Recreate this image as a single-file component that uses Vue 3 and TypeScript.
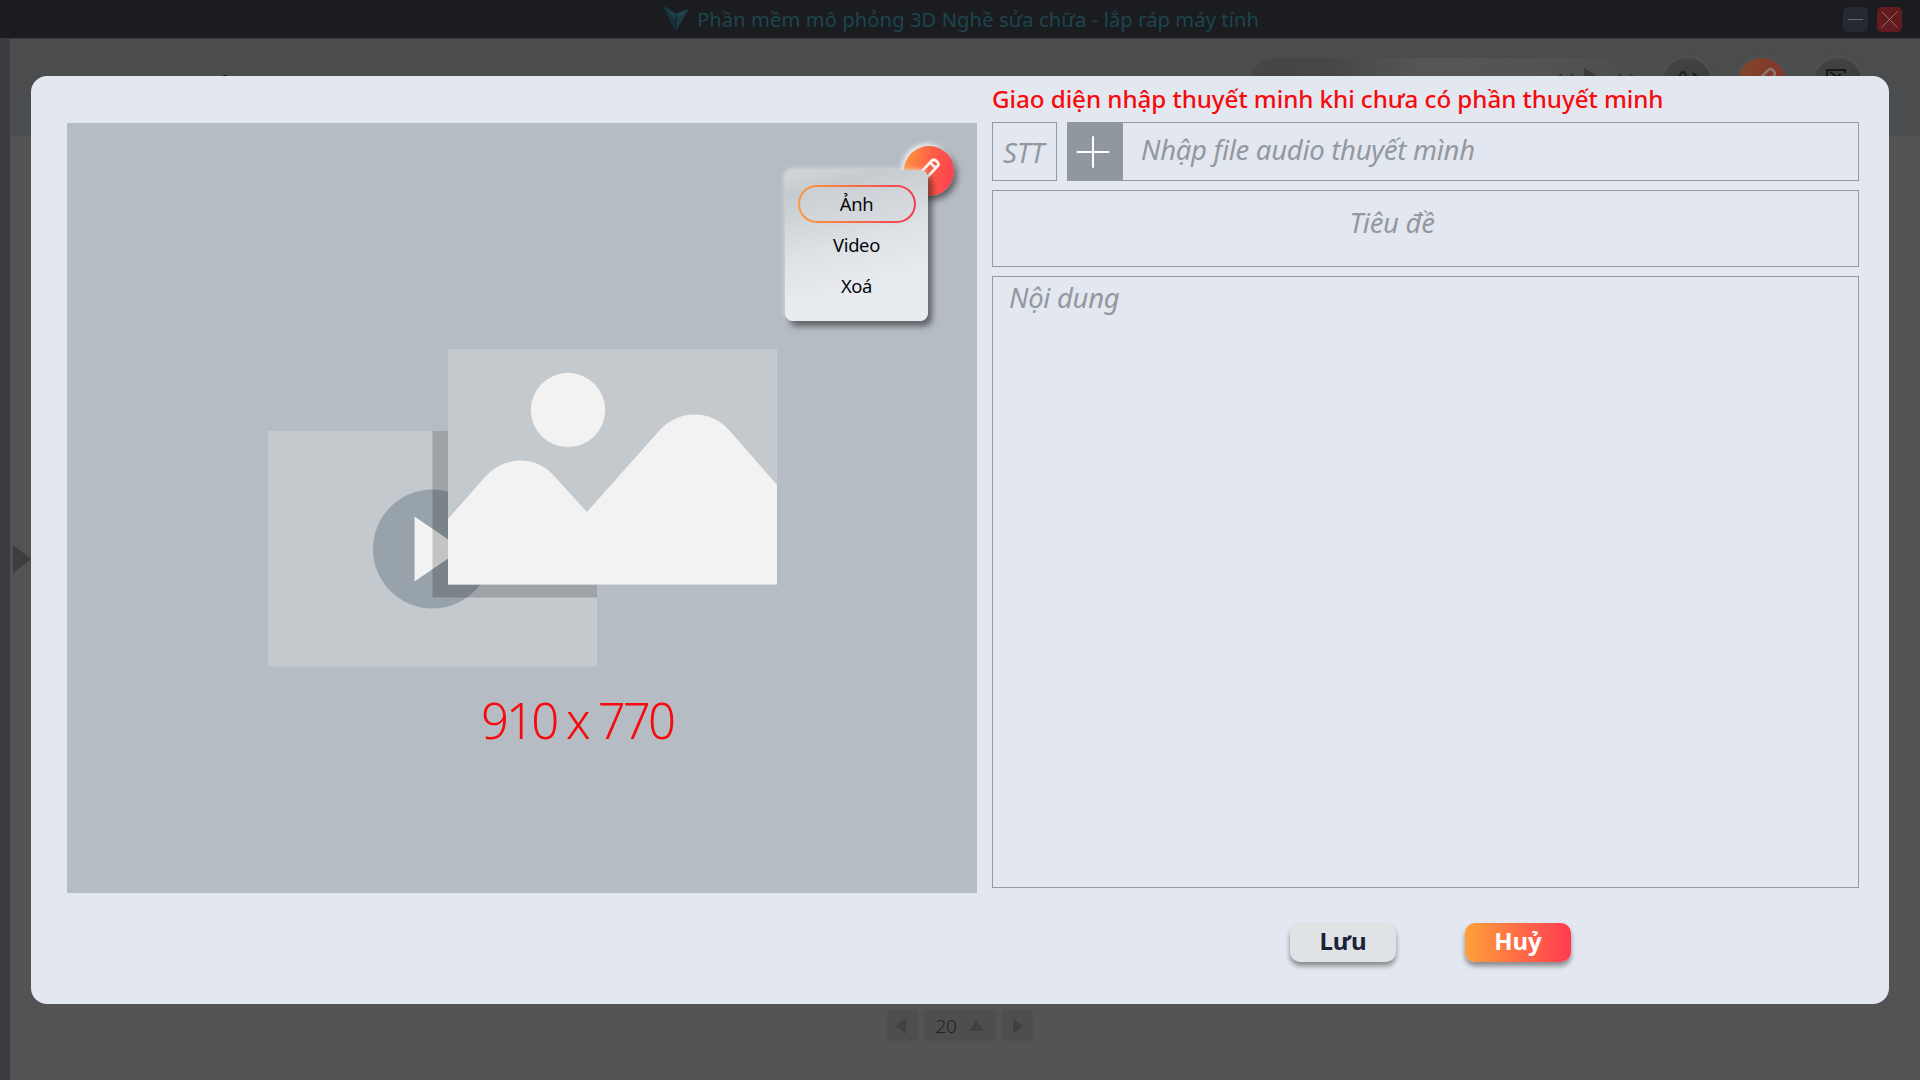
<script setup lang="ts">
import { ref } from 'vue'

const menuItems: string[] = ['Ảnh', 'Video', 'Xoá']
const activeItem = ref<string>('Ảnh')
const pageNumber = ref<number>(20)
</script>

<template>
  <div class="app">
    <header class="titlebar">
      <div class="brand">
        <svg class="logo" width="28" height="26" viewBox="0 0 28 26">
          <path d="M1 0L14 8L13 25Z" fill="#17323a" />
          <path d="M15 8L27 3L14 25Z" fill="#1c3b42" />
          <path d="M1 0L15 8L13 13Z" fill="#1d3f46" />
          <path d="M15 7L27 3L17 11Z" fill="#21474e" />
        </svg>
        <span class="app-title">Phần mềm mô phỏng 3D Nghề sửa chữa - lắp ráp máy tính</span>
      </div>
      <div class="window-buttons">
        <button class="win min">
          <svg width="25" height="25" viewBox="0 0 25 25"><path d="M5 12.500H20" stroke="#686a71" stroke-width="1" /></svg>
        </button>
        <button class="win close">
          <svg width="25" height="25" viewBox="0 0 25 25"><path d="M4.500 4.500L20.500 20.500M20.500 4.500L4.500 20.500" stroke="#8b7071" stroke-width="1" /></svg>
        </button>
      </div>
    </header>

    <div class="body">
      <aside class="rail"></aside>
      <main class="page">
        <div class="toolbar">
          <span class="name-mark"></span>
          <div class="player">
            <svg width="90" height="24" viewBox="0 0 90 24" fill="#39393b">
              <path d="M11 5V19L1 12ZM22 5V19L12 12Z" />
              <path d="M33 0L51 11L33 22Z" />
              <path d="M68 5V19L78 12ZM79 5V19L89 12Z" />
            </svg>
          </div>
          <div class="round">
            <svg width="48" height="48" viewBox="0 0 48 48" fill="none" stroke="#1a1a1f" stroke-width="2">
              <path d="M16 22Q17 14 20 14Q23 14 23 20M30 15L35 20" />
            </svg>
          </div>
          <div class="round hot">
            <svg width="48" height="48" viewBox="0 0 48 48">
              <g transform="rotate(45 24 24)" fill="none" stroke="#8a7672" stroke-width="2.500"><rect x="20" y="8" width="8" height="26" rx="3" /></g>
            </svg>
          </div>
          <div class="round">
            <svg width="48" height="48" viewBox="0 0 48 48" fill="none" stroke="#18181c" stroke-width="2">
              <path d="M13 32V12H31V15M16 14L23 19L27 16" />
            </svg>
          </div>
        </div>
        <div class="workspace">
          <svg class="expand" width="20" height="32" viewBox="0 0 20 32"><path d="M1 1L19 15L1 29Z" fill="#3c3d3e" /></svg>
        </div>
        <footer class="pager">
          <span class="page-btn"><svg width="10" height="16" viewBox="0 0 10 16"><path d="M10 0V16L0 8Z" /></svg></span>
          <span class="page-size">
            {{ pageNumber }}
            <svg width="15" height="11" viewBox="0 0 15 11"><path d="M0 11H15L7.500 0Z" /></svg>
          </span>
          <span class="page-btn"><svg width="10" height="16" viewBox="0 0 10 16"><path d="M0 0V16L10 8Z" /></svg></span>
        </footer>
      </main>
    </div>

    <section class="modal">
      <div class="media">
        <svg class="placeholder" width="510" height="318" viewBox="0 0 510 318">
          <rect x="0" y="82" width="329" height="235.500" fill="#c4c9ce" />
          <circle cx="164.500" cy="200" r="59.500" fill="#98a2aa" />
          <path d="M146.500 167.500V232.500L194 200Z" fill="#f2f2f2" />
          <path d="M164.500 82H329V248.500H164.500Z" fill="#000" opacity=".19" />
          <rect x="180" y="0" width="329" height="235.500" fill="#c4c9ce" />
          <circle cx="300" cy="61" r="37.200" fill="#f2f2f2" />
          <path d="M180 170L217 128Q232 111.500 252.500 111.500Q273 111.500 287 128L319 163L390 83Q405 65.500 427 65.500Q447 65.500 461 81L509 136V235.500H180Z" fill="#f2f2f2" />
        </svg>
        <p class="dimension">910 x 770</p>
        <button class="edit">
          <svg width="50" height="50" viewBox="0 0 50 50">
            <g transform="translate(24.500 24) rotate(43)" fill="none" stroke="#fbf4ee" stroke-width="2.800" stroke-linejoin="round">
              <path d="M-4 -9Q-4 -12 0 -12Q4 -12 4 -9V8L0 14L-4 8ZM-4 -6.500H4" />
            </g>
          </svg>
        </button>
        <nav class="menu">
          <button
            v-for="item in menuItems"
            :key="item"
            class="menu-item"
            :class="{ active: item === activeItem }"
            @click="activeItem = item"
          >{{ item }}</button>
        </nav>
      </div>

      <div class="form">
        <h1 class="notice"><span>Giao diện nhập thuyết minh khi chưa có phần thuyết minh</span></h1>
        <div class="row">
          <div class="field order"><span>STT</span></div>
          <div class="field audio">
            <button class="add">
              <svg width="56" height="58" viewBox="0 0 56 58"><path d="M10.500 29H41.500M26 14V44" stroke="#fff" stroke-width="2" stroke-linecap="round" /></svg>
            </button>
            <span>Nhập file audio thuyết mình</span>
          </div>
        </div>
        <div class="field title"><span>Tiêu đề</span></div>
        <div class="field content"><span>Nội dung</span></div>
        <div class="actions">
          <button class="btn save">Lưu</button>
          <button class="btn cancel">Huỷ</button>
        </div>
      </div>
    </section>
  </div>
</template>

<style>
body {
  margin: 0;
  background: #535353;
}
</style>

<style scoped>
* {
  box-sizing: border-box;
}

.app {
  position: relative;
  display: flex;
  flex-direction: column;
  width: 1920px;
  height: 1080px;
  overflow: hidden;
  background: #535353;
  font-family: 'Noto Sans', sans-serif;
}

button {
  padding: 0;
  border: 0;
  font-family: inherit;
}

svg {
  display: block;
}

.titlebar {
  display: flex;
  align-items: center;
  height: 38px;
  flex: none;
  padding: 0 18px 0 662px;
  background: #1b1c20;
}

.brand {
  display: flex;
  align-items: center;
  flex: 1;
  gap: 7px;
}

.app-title {
  padding-top: 1px;
  color: #1b454d;
  font-size: 20.2px;
  font-weight: 450;
  letter-spacing: 0.07px;
  line-height: 37px;
  white-space: nowrap;
}

.window-buttons {
  display: flex;
  gap: 9px;
}

.win {
  width: 25px;
  height: 25px;
  border-radius: 5px;
}

.min {
  background: #262932;
}

.close {
  background: #641b1f;
}

.body {
  display: flex;
  flex: 1;
  border-top: 1px solid #3c3d3e;
}

.rail {
  width: 10px;
  background: #3b3c3f;
}

.page {
  display: flex;
  flex: 1;
  flex-direction: column;
}

.toolbar {
  display: flex;
  height: 97px;
  padding: 19px 58px 0 212px;
  background: #4b4c4d;
}

.name-mark {
  width: 6px;
  height: 4px;
  margin-top: 17px;
  border-radius: 3px 3px 0 0;
  background: #17181b;
}

.player {
  display: flex;
  width: 434px;
  height: 48px;
  margin-left: auto;
  padding: 10px 0 0 300px;
  border-radius: 24px;
  background: linear-gradient(90deg, #454548, #464648 18%, #545554 38%, #545454 65%, #4b4c4d 90%);
}

.round {
  width: 48px;
  height: 48px;
  margin-left: 28px;
  border-radius: 50%;
  background: linear-gradient(150deg, #444545, #36373a);
  box-shadow: 0 0 4px #5a5b5b;
}

.player + .round {
  margin-left: -22px;
  margin-right: -1px;
}

.round.hot {
  background: linear-gradient(90deg, #7f4727, #85362e);
}

.workspace {
  display: flex;
  align-items: center;
  height: 848px;
  padding-left: 2px;
}

.pager {
  display: flex;
  align-items: center;
  gap: 6px;
  height: 58px;
  padding: 25px 0 0 877px;
  color: #1f1f1f;
}

.pager svg {
  fill: #414141;
}

.page-btn,
.page-size {
  display: flex;
  align-items: center;
  justify-content: center;
  height: 31px;
  border-radius: 3px;
  background: #4e4e4e;
}

.page-btn {
  width: 31px;
}

.page-btn:first-child {
  padding-right: 3px;
}

.page-size {
  width: 72px;
  gap: 13px;
  font-size: 19px;
  font-weight: 350;
  letter-spacing: -0.4px;
}

.modal {
  position: absolute;
  top: 76px;
  left: 31px;
  display: flex;
  gap: 15px;
  width: 1858px;
  height: 928px;
  padding: 0 30px 0 36px;
  border-radius: 16px;
  background: #e3e7ef;
}

.media {
  position: relative;
  flex: none;
  width: 910px;
  height: 770px;
  margin-top: 47px;
  padding-top: 226px;
  background: #b6bcc4;
}

.placeholder {
  margin-left: 201px;
}

.dimension {
  margin: 20px 0 0 110px;
  color: #f60a0c;
  font-size: 49px;
  font-weight: 300;
  line-height: 67px;
  letter-spacing: -2.9px;
  text-align: center;
}

.edit {
  position: absolute;
  top: 23px;
  left: 837px;
  width: 50px;
  height: 50px;
  border-radius: 50%;
  background: linear-gradient(100deg, #ff9a3c, #fd5f47 50%, #fd3c52);
  box-shadow: 3px 4px 6px rgba(0, 0, 0, 0.5), -2px -2px 5px rgba(255, 255, 255, 0.9);
}

.menu {
  position: absolute;
  top: 47px;
  left: 718px;
  display: flex;
  flex-direction: column;
  align-items: center;
  gap: 3px;
  width: 143px;
  height: 151px;
  padding-top: 15px;
  border-radius: 8px;
  background: linear-gradient(165deg, #d2d7db 0%, #c6cbd0 14%, #dde2e6 48%, #e8ecf0 75%);
  box-shadow: 4px 5px 6px rgba(0, 0, 0, 0.5), -1px -1px 4px rgba(255, 255, 255, 0.6);
}

.menu-item {
  width: 118px;
  height: 38px;
  border: 2px solid transparent;
  border-radius: 19px;
  background: transparent;
  color: #06080c;
  font-size: 18.4px;
  font-weight: 370;
  letter-spacing: -0.35px;
  line-height: 34px;
}

.menu-item.active {
  background: linear-gradient(165deg, #c9ced3, #d9dde1) padding-box, linear-gradient(90deg, #f99b3c, #f43a54) border-box;
}

.form {
  display: flex;
  flex: 1;
  flex-direction: column;
}

.notice {
  margin: 0;
  height: 46px;
  color: #f60a0c;
  font-size: 24.2px;
  font-weight: 460;
  letter-spacing: -0.06px;
  line-height: 46px;
  white-space: nowrap;
}

.row {
  display: flex;
  gap: 10px;
  margin-bottom: 9px;
}

.field {
  display: flex;
  border: 1px solid #9399a2;
  color: #9298a0;
  font-size: 27.5px;
  font-style: italic;
  font-weight: 380;
  letter-spacing: -0.3px;
  white-space: nowrap;
}

.order {
  width: 65px;
  height: 59px;
  align-items: center;
  justify-content: center;
}

.order span {
  padding: 1px 2px 0 0;
}

.audio {
  flex: 1;
  height: 59px;
  line-height: 54px;
}

.add {
  width: 56px;
  height: 59px;
  margin: -1px 18px 0 -1px;
  background: #90979e;
}

.title {
  height: 77px;
  justify-content: center;
  margin-bottom: 9px;
  padding: 13px 67px 0 0;
}

.content {
  height: 612px;
  padding: 2px 16px;
}

.actions {
  display: flex;
  gap: 69px;
  margin: 35px 0 0 298px;
}

.btn {
  width: 106px;
  height: 39px;
  border-radius: 10px;
  font-size: 24px;
  font-weight: 700;
  line-height: 35px;
  padding-bottom: 4px;
  box-shadow: 0 4px 5px rgba(0, 0, 0, 0.4);
}

.save {
  background: #e0e3e5;
  color: #1b2238;
}

.cancel {
  background: linear-gradient(90deg, #fea03b, #ff3b52);
  color: #fff;
}
</style>
